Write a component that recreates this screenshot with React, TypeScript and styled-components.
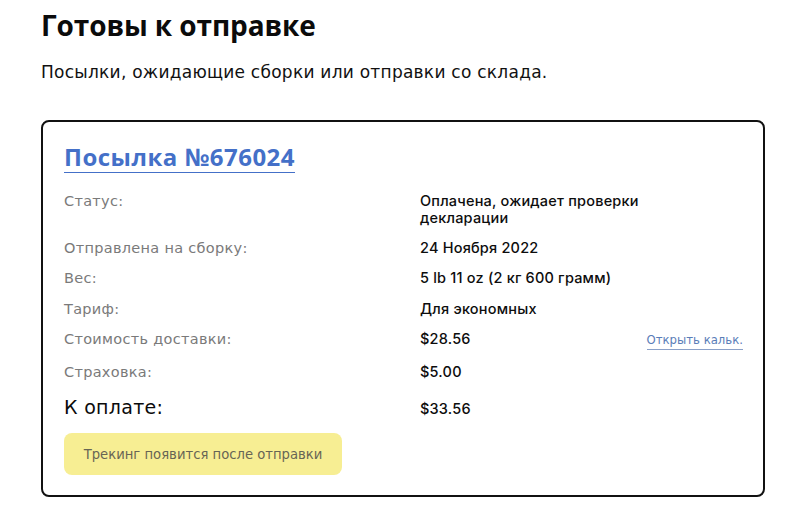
import React from "react";
import styled, { createGlobalStyle } from "styled-components";

const GlobalStyle = createGlobalStyle`
  html, body { margin: 0; padding: 0; background: #ffffff; }
  body { font-family: "DejaVu Sans", "Noto Sans", sans-serif; color: #111; }
  * { box-sizing: border-box; }
`;

const Page = styled.div`
  width: 807px;
  height: 509px;
  padding: 6px 42px 0 41px;
  overflow: hidden;
`;

const Heading = styled.h1`
  margin: 0;
  font-family: "Open Sans", sans-serif;
  font-size: 28px;
  line-height: 38px;
  font-weight: 700;
  color: #0b0b0b;
  letter-spacing: -0.1px;
`;

const Subtitle = styled.p`
  margin: 17px 0 0 0;
  font-size: 17px;
  line-height: 22px;
  color: #111;
  letter-spacing: 0.25px;
`;

const Card = styled.section`
  margin-top: 37px;
  width: 724px;
  height: 377px;
  border: 2px solid #111;
  border-radius: 8px;
  padding: 20px 20px 20px 21px;
  display: flex;
  flex-direction: column;
`;

const ParcelLink = styled.a`
  align-self: flex-start;
  font-family: "Open Sans", sans-serif;
  font-size: 24px;
  line-height: 30px;
  font-weight: 700;
  color: #4470c8;
  text-decoration: none;
  border-bottom: 1.5px solid #4470c8;
  letter-spacing: 0.5px;
`;

const Details = styled.dl`
  margin: 19px 0 0 0;
  display: grid;
  grid-template-columns: 356px 1fr auto;
  row-gap: 12.5px;
  align-items: baseline;
`;

const Label = styled.dt<{ $strong?: boolean }>`
  grid-column: 1;
  margin: 0;
  font-size: ${(p) => (p.$strong ? "19px" : "14.5px")};
  line-height: ${(p) => (p.$strong ? "22px" : "17px")};
  color: ${(p) => (p.$strong ? "#0b0b0b" : "#7a7a7a")};
  letter-spacing: 0.3px;
  padding-top: ${(p) => (p.$strong ? "3px" : "0")};
`;

const Value = styled.dd<{ $span?: boolean }>`
  grid-column: ${(p) => (p.$span ? "2 / 4" : "2")};
  margin: 0;
  font-family: "Inter", "DejaVu Sans", sans-serif;
  font-weight: 500;
  font-size: 14.5px;
  line-height: 17px;
  color: #0d0d0d;
  max-width: 260px;
  letter-spacing: 0.2px;
`;

const CalcLink = styled.a`
  grid-column: 3;
  justify-self: end;
  font-size: 11.7px;
  line-height: 17px;
  color: #5a7db8;
  text-decoration: none;
  border-bottom: 1px solid #8aa0c8;
`;

const TrackingNote = styled.div`
  margin-top: 15px;
  flex-shrink: 0;
  align-self: flex-start;
  width: 278px;
  height: 42px;
  border-radius: 8px;
  background: #f7ee93;
  color: #676555;
  font-size: 13.2px;
  display: flex;
  align-items: center;
  justify-content: center;
`;

const rows: { label: string; value: string; link?: string; strong?: boolean }[] = [
  { label: "Статус:", value: "Оплачена, ожидает проверки декларации" },
  { label: "Отправлена на сборку:", value: "24 Ноября 2022" },
  { label: "Вес:", value: "5 lb 11 oz (2 кг 600 грамм)" },
  { label: "Тариф:", value: "Для экономных" },
  { label: "Стоимость доставки:", value: "$28.56", link: "Открыть кальк." },
  { label: "Страховка:", value: "$5.00" },
  { label: "К оплате:", value: "$33.56", strong: true },
];

export default function App() {
  return (
    <>
      <GlobalStyle />
      <Page>
        <Heading>Готовы к отправке</Heading>
        <Subtitle>Посылки, ожидающие сборки или отправки со склада.</Subtitle>
        <Card>
          <ParcelLink href="#">Посылка №676024</ParcelLink>
          <Details>
            {rows.map((r) => (
              <React.Fragment key={r.label}>
                <Label $strong={r.strong}>{r.label}</Label>
                <Value $span={!r.link}>{r.value}</Value>
                {r.link && <CalcLink href="#">{r.link}</CalcLink>}
              </React.Fragment>
            ))}
          </Details>
          <TrackingNote>Трекинг появится после отправки</TrackingNote>
        </Card>
      </Page>
    </>
  );
}
